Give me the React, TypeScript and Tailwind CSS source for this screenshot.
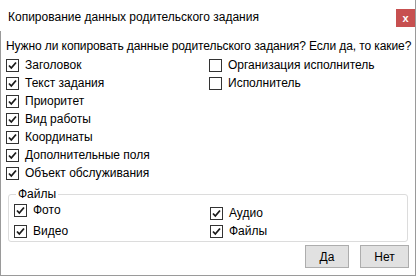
import { useState } from 'react';

type Item = { label: string; checked: boolean };

const leftItems: Item[] = [
  { label: 'Заголовок', checked: true },
  { label: 'Текст задания', checked: true },
  { label: 'Приоритет', checked: true },
  { label: 'Вид работы', checked: true },
  { label: 'Координаты', checked: true },
  { label: 'Дополнительные поля', checked: true },
  { label: 'Объект обслуживания', checked: true },
];

const rightItems: Item[] = [
  { label: 'Организация исполнитель', checked: false },
  { label: 'Исполнитель', checked: false },
];

function CheckBox({ label, checked }: Item) {
  const [on, setOn] = useState(checked);
  return (
    <label className="flex h-[18px] items-center gap-[6px] cursor-default" onClick={() => setOn(!on)}>
      <span className="flex h-[13px] w-[13px] shrink-0 items-center justify-center border border-[#333333] bg-white">
        {on && (
          <svg width="9" height="9" viewBox="0 0 9 9">
            <path d="M1 4.5 L3.3 7 L8 1.5" fill="none" stroke="#1a1a1a" strokeWidth="1.8" />
          </svg>
        )}
      </span>
      <span className="whitespace-nowrap">{label}</span>
    </label>
  );
}

export default function App() {
  return (
    <div
      className="flex h-[276px] w-[416px] flex-col bg-white text-[12px] leading-none text-[#000]"
      style={{ fontFamily: '"Liberation Sans", Arial, sans-serif' }}
    >
      <div className="flex h-[31px] items-start justify-between border-r border-[#9a9a9a]">
        <span className="pl-[8px] pt-[11px] text-[12px]">Копирование данных родительского задания</span>
        <button className="mt-[9px] flex h-[18px] w-[19px] items-center justify-center bg-[#c75050] text-[11px] font-bold text-white">
          x
        </button>
      </div>
      <div className="flex flex-1 flex-col border-x border-b border-[#9a9a9a] px-[5px]">
        <div className="pt-[9px] pb-[4px] whitespace-nowrap tracking-[-0.1px]">
          Нужно ли копировать данные родительского задания? Если да, то какие?
        </div>
        <div className="flex">
          <div className="flex w-[203px] flex-col">
            {leftItems.map((i) => (
              <CheckBox key={i.label} {...i} />
            ))}
          </div>
          <div className="flex flex-col">
            {rightItems.map((i) => (
              <CheckBox key={i.label} {...i} />
            ))}
          </div>
        </div>
        <fieldset className="mx-[2px] mt-[6px] rounded-[3px] border border-[#dcdcdc] px-[5px] pb-[1px]">
          <legend className="ml-[2px] px-[2px] leading-[13px]">Файлы</legend>
          <div className="flex">
            <div className="flex w-[196px] flex-col gap-[3px]">
              <CheckBox label="Фото" checked />
              <CheckBox label="Видео" checked />
            </div>
            <div className="flex flex-col pt-[3px]">
              <CheckBox label="Аудио" checked />
              <CheckBox label="Файлы" checked />
            </div>
          </div>
        </fieldset>
        <div className="mt-[3px] flex justify-end gap-[11px] pr-[1px]">
          <button className="h-[23px] w-[44px] border border-[#adadad] bg-[#e1e1e1] text-[12px]">Да</button>
          <button className="h-[23px] w-[49px] border border-[#adadad] bg-[#e1e1e1] text-[12px]">Нет</button>
        </div>
      </div>
    </div>
  );
}
